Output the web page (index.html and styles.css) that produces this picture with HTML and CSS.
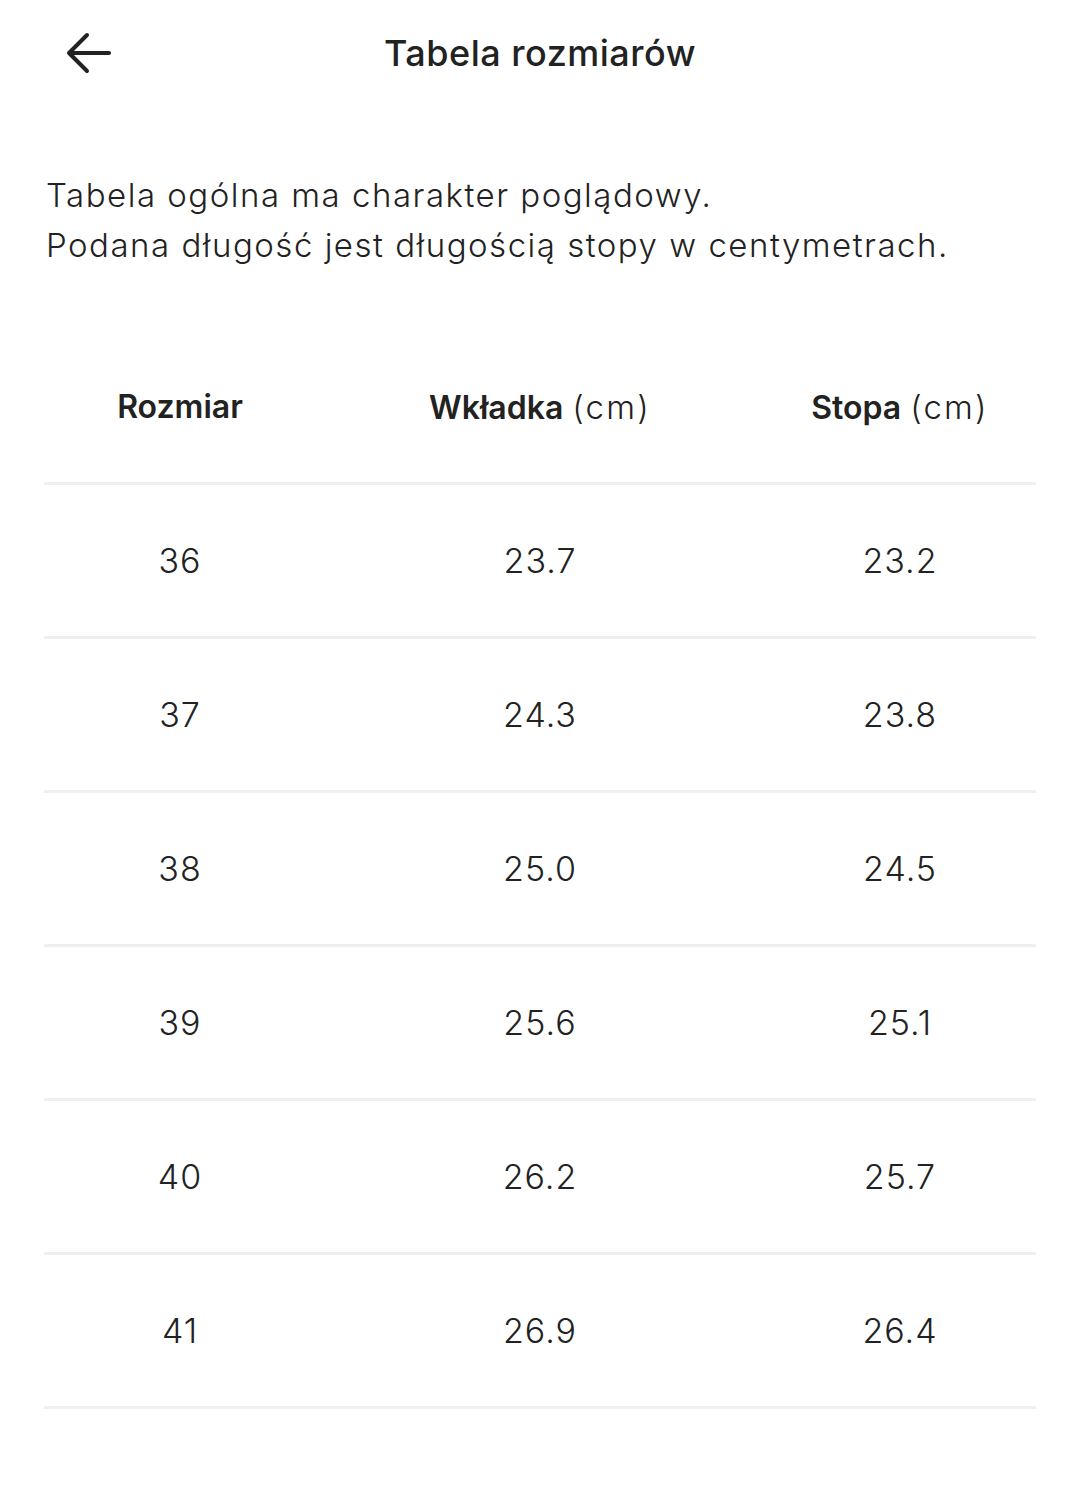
FILE: index.html
```html
<!DOCTYPE html>
<html lang="pl">
<head>
<meta charset="utf-8">
<title>Tabela rozmiarów</title>
<link rel="stylesheet" href="styles.css">
</head>
<body>
<header class="topbar">
  <button class="back" aria-label="Wstecz">
    <svg width="46" height="42" viewBox="0 0 46 42" fill="none" stroke="#222" stroke-width="4" stroke-linecap="round" stroke-linejoin="round">
      <path d="M43 21H4"/>
      <path d="M21 3L3 21L21 39"/>
    </svg>
  </button>
  <h1 class="title">Tabela rozmiarów</h1>
</header>
<p class="intro">Tabela ogólna ma charakter poglądowy.<br>Podana długość jest długością stopy w centymetrach.</p>
<div class="table">
  <div class="row head">
    <div class="cell"><b>Rozmiar</b></div>
    <div class="cell"><b>Wkładka</b> <span class="unit">(cm)</span></div>
    <div class="cell"><b>Stopa</b> <span class="unit">(cm)</span></div>
  </div>
  <div class="row"><div class="cell">36</div><div class="cell">23.7</div><div class="cell">23.2</div></div>
  <div class="row"><div class="cell">37</div><div class="cell">24.3</div><div class="cell">23.8</div></div>
  <div class="row"><div class="cell">38</div><div class="cell">25.0</div><div class="cell">24.5</div></div>
  <div class="row"><div class="cell">39</div><div class="cell">25.6</div><div class="cell">25.1</div></div>
  <div class="row"><div class="cell">40</div><div class="cell">26.2</div><div class="cell">25.7</div></div>
  <div class="row"><div class="cell">41</div><div class="cell">26.9</div><div class="cell">26.4</div></div>
</div>
</body>
</html>
```
FILE: styles.css
```css
* { box-sizing: border-box; }
html, body { margin: 0; padding: 0; background: #fff; }
body {
  width: 1080px;
  font-family: "Inter", "Liberation Sans", sans-serif;
  color: #222;
}
.topbar {
  height: 106px;
  display: flex;
  align-items: center;
  justify-content: center;
  position: relative;
}
.back {
  position: absolute;
  left: 66px;
  top: 32px;
  padding: 0;
  border: 0;
  background: none;
  display: flex;
}
.title {
  margin: 0;
  font-size: 36px;
  font-weight: 500;
  letter-spacing: 0.5px;
}
.intro {
  margin: 64px 0 0 46px;
  font-size: 33px;
  line-height: 50px;
  font-weight: 300;
  letter-spacing: 1.5px;
}
.table {
  margin-top: 61px;
}
.row {
  display: grid;
  grid-template-columns: 316px 360px 316px;
  align-items: center;
  height: 154px;
  margin: 0 44px;
  border-bottom: 3px solid #efefef;
}
.cell {
  text-align: center;
  font-size: 34px;
  font-weight: 300;
  letter-spacing: 1px;
}
.row .cell:first-child { margin-left: -44px; width: 360px; }
.row .cell:last-child { margin-right: -44px; width: 360px; }
.head .cell { font-size: 32px; letter-spacing: 0; }
.head b { font-weight: 600; }
.head .unit { font-weight: 300; letter-spacing: 2.2px; font-size: 33px; }
```
